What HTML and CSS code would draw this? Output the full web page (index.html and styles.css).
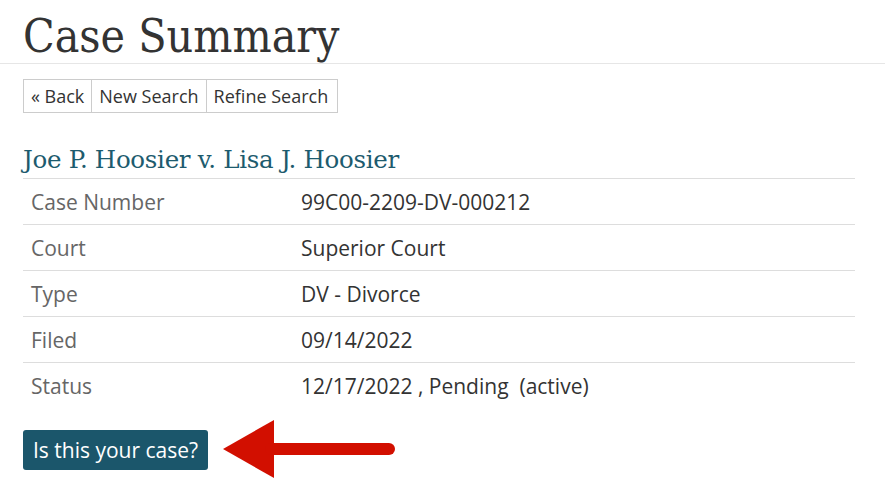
FILE: index.html
```html
<!DOCTYPE html>
<html>
<head>
<meta charset="utf-8">
<link rel="stylesheet" href="styles.css">
</head>
<body>
<div class="page-header">
  <h1 class="title">Case Summary</h1>
</div>
<div class="content">
  <div class="btn-group">
    <span class="btn">« Back</span><span class="btn">New Search</span><span class="btn">Refine Search</span>
  </div>
  <h2 class="case-title">Joe P. Hoosier v. Lisa J. Hoosier</h2>
  <table class="details">
    <tr><td class="label">Case Number</td><td class="value">99C00-2209-DV-000212</td></tr>
    <tr><td class="label">Court</td><td class="value">Superior Court</td></tr>
    <tr><td class="label">Type</td><td class="value">DV - Divorce</td></tr>
    <tr><td class="label">Filed</td><td class="value">09/14/2022</td></tr>
    <tr><td class="label">Status</td><td class="value">12/17/2022 , Pending&nbsp; (active)</td></tr>
  </table>
  <div class="action-row">
    <span class="primary-btn">Is this your case?</span>
    <svg class="arrow" width="180" height="62" viewBox="0 0 180 62">
      <polygon points="0,30 51,1 51,59" fill="#d20f00"/>
      <line x1="48" y1="30" x2="166" y2="30" stroke="#d20f00" stroke-width="12" stroke-linecap="round"/>
    </svg>
  </div>
</div>
</body>
</html>
```

FILE: styles.css
```css
html, body {
  margin: 0;
  padding: 0;
  background: #fff;
}
body {
  font-family: "Open Sans", "Liberation Sans", sans-serif;
  color: #333;
}
.page-header {
  padding-left: 23px;
  border-bottom: 1px solid #e6e6e6;
  height: 64px;
  box-sizing: border-box;
}
.title {
  margin: 0;
  padding-top: 10px;
  font-family: "DejaVu Serif Condensed", "DejaVu Serif", serif;
  font-weight: normal;
  font-size: 46px;
  line-height: 52px;
  color: #333;
}
.content {
  padding: 0 30px 0 23px;
}
.btn-group {
  margin-top: 15px;
  display: flex;
}
.btn {
  display: inline-block;
  border: 1px solid #ccc;
  height: 34px;
  box-sizing: border-box;
  line-height: 32px;
  font-size: 18px;
  padding: 0 7px;
  color: #333;
  margin-left: -1px;
}
.btn:first-child {
  margin-left: 0;
}
.btn:last-child {
  padding-right: 9px;
}
.case-title {
  margin: 29px 0 0 0;
  font-family: "DejaVu Serif", "Liberation Serif", serif;
  font-weight: normal;
  font-size: 24.5px;
  line-height: 36px;
  color: #1d5b6e;
  letter-spacing: -0.3px;
}
.details {
  width: 100%;
  border-collapse: collapse;
  margin-top: 0;
}
.details td {
  border-top: 1px solid #ddd;
  height: 45px;
  padding: 0 8px;
  font-size: 21px;
  vertical-align: middle;
}
.details td.label {
  width: 254px;
  color: #666;
}
.details td.value {
  color: #333;
}
.action-row {
  margin-top: 11px;
  display: flex;
  align-items: center;
}
.primary-btn {
  display: inline-block;
  background: #1b566b;
  color: #fff;
  font-size: 21px;
  height: 40px;
  line-height: 40px;
  padding: 0 10px;
  border-radius: 3px;
  box-sizing: border-box;
}
.arrow {
  margin-left: 15px;
  display: block;
}
```
